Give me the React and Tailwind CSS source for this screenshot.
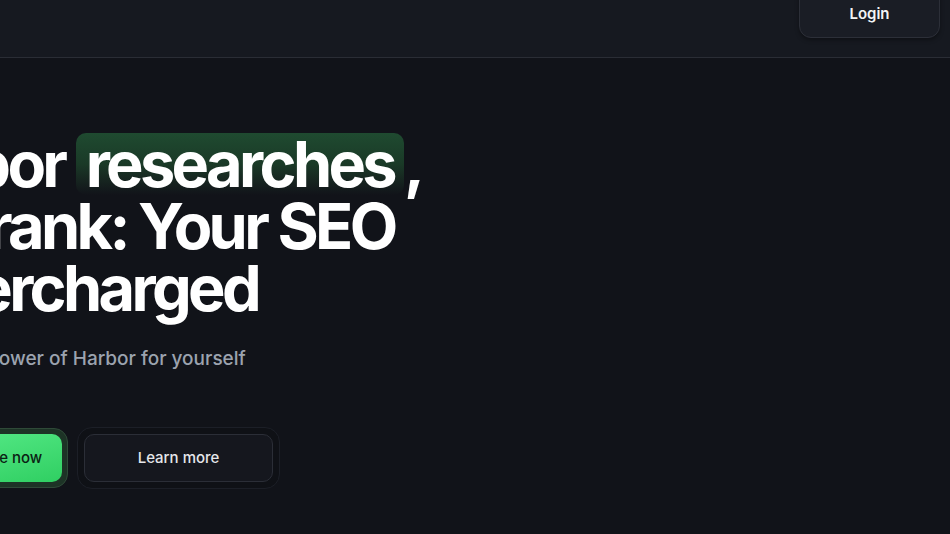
import React from "react";

export default function App() {
    return (
        <div className="min-h-[534px] w-full overflow-hidden bg-[#111319] font-['Inter',sans-serif] text-white">
            {/* Top bar */}
            <header className="flex h-[58px] items-start justify-end border-b border-[#2a2d35] bg-[#161920] pr-[10px]">
                <button className="-mt-[14px] flex h-[52px] w-[141px] items-end justify-center rounded-[12px] border border-[#2c2f38] bg-[#1a1d25] pb-[12px] text-[15px] font-semibold text-[#f3f4f6] shadow-[0_2px_4px_rgba(0,0,0,0.35)]">
                    Login
                </button>
            </header>

            {/* Hero */}
            <section className="-ml-[128px] pt-[75px]">
                <h1 className="text-[63px] font-bold leading-[62px] tracking-[-0.058em] text-white">
                    Harbor{" "}
                    <span className="inline-block rounded-[10px] bg-gradient-to-b from-[#1f4a30] via-[#1a3a27] to-[#111319] px-[10px]">
                        researches
                    </span>
                    ,
                    <br />
                    you rank: Your SEO
                    <br />
                    supercharged
                </h1>

                <p className="-ml-[4px] mt-[26px] text-[19px] font-medium leading-[28px] text-[#9ca3af]">
                    Discover the power of Harbor for yourself
                </p>

                <div className="mt-[54px] flex items-center gap-[9px]">
                    <div className="rounded-[14px] border border-[#2f4a38] bg-[#1d3326] p-[5px]">
                        <button className="flex h-[48px] w-[184px] items-center justify-center rounded-[10px] bg-gradient-to-br from-[#5cf08f] to-[#2fcf62] text-[15px] font-medium text-[#0b2214]">
                            Try Harbor free now
                        </button>
                    </div>
                    <div className="rounded-[15px] border border-[#1c1f27] bg-[#0f1116] p-[6px]">
                        <button className="flex h-[48px] w-[189px] items-center justify-center rounded-[10px] border border-[#2b2e37] bg-[#15171e] text-[15px] font-medium text-[#e5e7eb]">
                            Learn more
                        </button>
                    </div>
                </div>
            </section>
        </div>
    );
}
